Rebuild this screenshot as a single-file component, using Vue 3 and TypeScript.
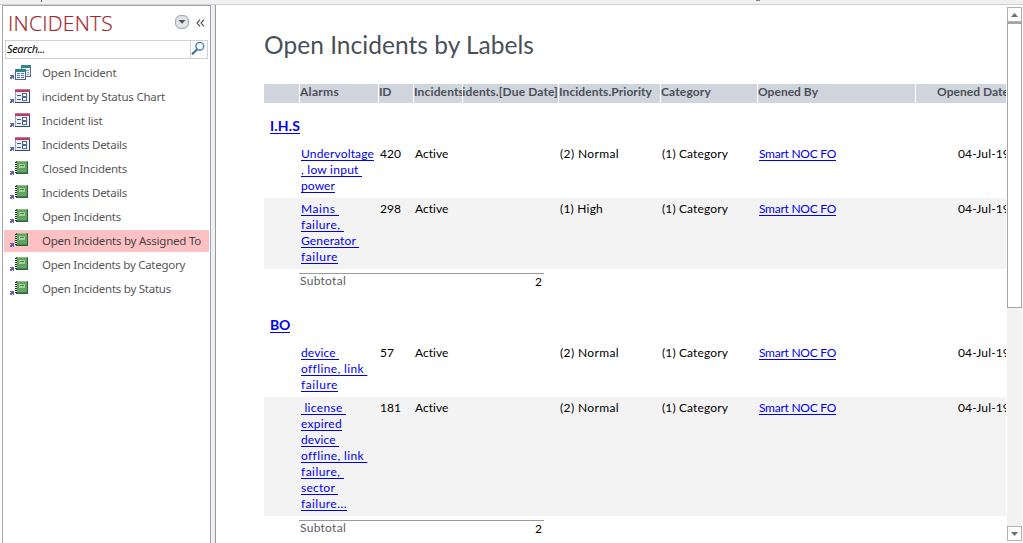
<script setup lang="ts">
import type { Directive } from 'vue'

type Fitted = [text: string, width: number]
interface NavItem { label: Fitted; icon: 'query' | 'form' | 'report'; selected?: boolean }
interface Incident { alarms: Fitted[]; id: Fitted; priority: Fitted }
interface Group { name: Fitted; rows: Incident[] }

/* Spreads the glyphs of a label evenly over its given width in pixels. */
const vFit: Directive<HTMLElement, number> = {
  mounted(el, { value }) {
    const natural = el.getBoundingClientRect().width
    const count = (el.textContent ?? '').length
    if (count) el.style.letterSpacing = `${(value - natural) / count}px`
  },
}

const nav: NavItem[] = [
  { label: ['Open Incident', 74.5], icon: 'query' },
  { label: ['incident by Status Chart', 123], icon: 'form' },
  { label: ['Incident list', 60.5], icon: 'form' },
  { label: ['Incidents Details', 85], icon: 'form' },
  { label: ['Closed Incidents', 85], icon: 'report' },
  { label: ['Incidents Details', 85], icon: 'report' },
  { label: ['Open Incidents', 79], icon: 'report' },
  { label: ['Open Incidents by Assigned To', 159], icon: 'report', selected: true },
  { label: ['Open Incidents by Category', 143], icon: 'report' },
  { label: ['Open Incidents by Status', 129], icon: 'report' },
]

const columns: { label: Fitted; align?: string }[] = [
  { label: ['', 0] },
  { label: ['Alarms', 39] },
  { label: ['ID', 12] },
  { label: ['Incidents', 50] },
  { label: ['Incidents.[Due Date]', 112], align: 'end' },
  { label: ['Incidents.Priority', 93] },
  { label: ['Category', 50] },
  { label: ['Opened By', 60] },
  { label: ['Opened Date', 72], align: 'date' },
]

const groups: Group[] = [
  {
    name: ['I.H.S', 30],
    rows: [
      { alarms: [['Undervoltage', 73], [', low input ', 61], ['power', 34]], id: ['420', 21], priority: ['(2) Normal', 59] },
      { alarms: [['Mains ', 38], ['failure, ', 43], ['Generator ', 58], ['failure', 37]], id: ['298', 21], priority: ['(1) High', 43] },
    ],
  },
  {
    name: ['BO', 20],
    rows: [
      { alarms: [['device ', 38], ['offline, link ', 66], ['failure', 37]], id: ['57', 14], priority: ['(2) Normal', 59] },
      {
        alarms: [[' license ', 45], ['expired', 41], ['device ', 38], ['offline, link ', 66], ['failure, ', 43], ['sector ', 37], ['failure...', 46]],
        id: ['181', 21],
        priority: ['(2) Normal', 59],
      },
    ],
  },
]
</script>

<template>
  <div class="window">
    <div class="strip"><i class="tail tail-p"></i><i class="tail tail-g"></i></div>
    <div class="body">
      <aside class="nav">
        <header class="nav-head">
          <h1><span v-fit="105" class="fit">INCIDENTS</span></h1>
          <svg class="menu" width="14" height="14" viewBox="0 0 14 14">
            <rect x=".6" y=".6" width="12.8" height="12.8" rx="5" fill="#e2e4e7" stroke="#969aa2" />
            <path d="M3.5 5h7L7 8.8z" fill="#4b5063" />
          </svg>
          <svg class="collapse" width="9" height="8" viewBox="0 0 9 8">
            <path d="M4 .7 1 4l3 3.3M8 .7 5 4l3 3.3" fill="none" stroke="#4c4f60" stroke-width="1.15" />
          </svg>
        </header>
        <div class="search">
          <span class="query"><span v-fit="38" class="fit">Search...</span></span>
          <span class="go">
            <svg width="15" height="15" viewBox="0 0 15 15">
              <path d="m6.2 8.2-4.6 4.6" stroke="#3f6fa9" stroke-width="2.2" stroke-linecap="round" />
              <circle cx="8.8" cy="5.3" r="3.9" fill="#f4f9ff" stroke="#4a7fbd" stroke-width="1.4" />
            </svg>
          </span>
        </div>
        <ul class="items">
          <li v-for="(item, i) in nav" :key="i" :class="{ selected: item.selected }">
            <svg class="icon" width="23" height="18" viewBox="0 0 23 18" shape-rendering="crispEdges">
              <path d="M1 11h4v4H4v-1H3v1H1v-2h1v-1H1z" fill="#6464ae" />
              <g v-if="item.icon === 'query'">
                <path d="M12 1h10v11H12z" fill="#eef3fa" />
                <path d="M12 1h10v3H12z" fill="#35828a" />
                <path d="M12 4h1v8h-1zM21 4h1v9h-1zM12 12h10v1H12z" fill="#5a7097" />
                <path d="M17 6h3v1h-3zM18 8h2v1h-2zM18 10h2v1h-2z" fill="#87a0c0" />
                <path d="M6 5h11v11H6z" fill="#eef3fa" />
                <path d="M6 5h11v3H6z" fill="#35828a" />
                <path d="M6 8h1v8H6zM16 8h1v8h-1zM6 15h11v1H6z" fill="#4c638d" />
                <path d="M8 9h3v1H8zM12 9h3v1h-3zM8 11h3v1H8zM12 11h3v1h-3zM8 13h3v1H8zM12 13h3v1h-3z" fill="#527aa0" />
              </g>
              <g v-else-if="item.icon === 'form'">
                <path d="M6 1h15v14H6z" fill="#e9f0fa" />
                <path d="M6 1h15v3H6z" fill="#b13d63" />
                <path d="M6 1h15v1H6z" fill="#cb7892" />
                <path d="M6 4h1v11H6z" fill="#91a6c8" />
                <path d="M20 4h1v11h-1zM6 14h15v1H6z" fill="#33496f" />
                <path d="M8 7h4v1H8zM8 11h4v1H8z" fill="#45597e" />
                <path d="M13.5 5.5h4v3h-4zM13.5 9.5h4v3h-4z" fill="#fff" stroke="#50658c" />
              </g>
              <g v-else>
                <path d="M7 1h12v13H7z" fill="#438447" />
                <path d="M8 1h10v11H8z" fill="#63a361" />
                <path d="M8 1h10v1H8z" fill="#8abc82" />
                <path d="M7 13h12v1H7zM18 2h1v12h-1z" fill="#2d6232" />
                <path d="M10 4h6v4h-6z" fill="#a5cf99" />
                <path d="M11 5h4v1h-4z" fill="#4a8b4b" />
                <path d="M6 2h2v1H6zM6 4h2v1H6zM6 6h2v1H6zM6 8h2v1H6zM6 10h2v1H6zM6 12h2v1H6z" fill="#222f26" />
                <path d="M7 3h1v1H7zM7 5h1v1H7zM7 7h1v1H7zM7 9h1v1H7zM7 11h1v1H7z" fill="#c8dbc6" />
              </g>
            </svg>
            <span v-fit="item.label[1]" class="fit">{{ item.label[0] }}</span>
          </li>
        </ul>
      </aside>
      <div class="splitter"></div>
      <main class="report">
        <h2><span v-fit="270" class="fit">Open Incidents by Labels</span></h2>
        <div class="grid head">
          <div v-for="(col, i) in columns" :key="i" :class="['cell', col.align]">
            <span v-if="col.label[0]" v-fit="col.label[1]" class="fit">{{ col.label[0] }}</span>
          </div>
        </div>
        <section v-for="group in groups" :key="group.name[0]" class="group">
          <h3><a v-fit="group.name[1]" class="fit">{{ group.name[0] }}</a></h3>
          <div v-for="(row, i) in group.rows" :key="i" class="grid row">
            <div></div>
            <div class="alarms">
              <div v-for="(line, n) in row.alarms" :key="n" class="line"><a v-fit="line[1]" class="fit">{{ line[0] }}</a></div>
            </div>
            <div><span v-fit="row.id[1]" class="fit">{{ row.id[0] }}</span></div>
            <div><span v-fit="33.5" class="fit">Active</span></div>
            <div></div>
            <div><span v-fit="row.priority[1]" class="fit">{{ row.priority[0] }}</span></div>
            <div><span v-fit="66" class="fit">(1) Category</span></div>
            <div><a v-fit="77" class="fit">Smart NOC FO</a></div>
            <div class="opened"><span v-fit="52" class="fit">04-Jul-19</span></div>
          </div>
          <footer class="subtotal">
            <span v-fit="46" class="fit">Subtotal</span>
            <span class="count">{{ group.rows.length }}</span>
          </footer>
        </section>
      </main>
      <div class="scrollbar">
        <div class="arrow"><svg width="7" height="4" viewBox="0 0 7 4"><path d="M0 4 3.5 0 7 4z" fill="#6d6d6d" /></svg></div>
        <div class="thumb"></div>
        <div class="track"></div>
        <div class="arrow"><svg width="7" height="4" viewBox="0 0 7 4"><path d="M0 0h7L3.5 4z" fill="#6d6d6d" /></svg></div>
      </div>
    </div>
  </div>
</template>

<style>
body { margin: 0; overflow: hidden; background: #fff; }
</style>

<style scoped>
.window { width: 1023px; height: 543px; overflow: hidden; display: flex; flex-direction: column; background: #fff; font-family: "Lato", "Liberation Sans", sans-serif; font-size: 12px; color: #000; }
h1, h2, h3, ul { margin: 0; padding: 0; font-weight: 400; }
.fit { display: inline-block; white-space: pre; flex: none; }
.strip { position: relative; box-sizing: border-box; height: 5px; flex: none; background: #f0f0f0; border-bottom: 1px solid #cfcfcf; }
.tail { position: absolute; top: 0; }
.tail-p { left: 41px; width: 1px; height: 2px; background: #666; }
.tail-g { left: 756px; width: 4px; height: 1px; background: #888; }
.body { display: flex; flex: 1; min-height: 0; }

.nav { box-sizing: border-box; width: 209px; margin-left: 2px; flex: none; border: 1px solid #9fa5b5; border-bottom: 0; font-family: "Noto Sans", sans-serif; }
.nav-head { display: flex; align-items: center; height: 34px; padding-left: 5px; }
.nav-head h1 { width: 167px; line-height: 34px; font-family: "Open Sans", "Noto Sans", sans-serif; font-size: 21px; font-weight: 300; color: #a4262c; -webkit-text-stroke: 0.2px #a4262c; }
.menu { margin-top: -3px; }
.collapse { margin: -1px 0 0 7px; }
.search { box-sizing: border-box; display: flex; width: 203px; height: 19px; margin-left: 2px; border: 1px solid #cfd1d6; }
.query { flex: 1; padding-left: 1px; line-height: 16px; font-size: 11px; font-style: italic; }
.go { width: 16px; border-left: 1px solid #cfd1d6; line-height: 0; }
.items { display: flex; flex-direction: column; gap: 2px; margin: 3px 1px 0; list-style: none; }
.items li { display: flex; align-items: center; height: 22px; padding-left: 5px; font-size: 11.5px; line-height: 22px; color: #575757; }
.items li.selected { background: #fec1c3; color: #444; }
.icon { flex: none; margin-right: 10px; }
.splitter { box-sizing: border-box; width: 5px; flex: none; background: #f0f0f2; border-right: 1px solid #9b9b9f; }

.report { flex: none; box-sizing: border-box; width: 790px; padding-left: 48px; overflow: hidden; }
.report h2 { height: 79px; line-height: 79px; font-size: 24.5px; color: #494f59; }
.grid { display: grid; grid-template-columns: 35px 78px 34px 48px 95px 101px 96px 157px 91px; column-gap: 1px; }
.head { height: 19px; font-weight: 700; color: #4b4f57; line-height: 16px; }
.cell { background: #cfd4dd; overflow: hidden; display: flex; }
.cell.end { justify-content: flex-end; }
.cell.date { padding-left: 21px; }
.group h3 { height: 40px; padding-left: 6px; line-height: 46px; font-size: 14px; font-weight: 700; }
.group h3 .fit { line-height: 18px; }
a { color: #0000f5; text-decoration: underline; text-underline-offset: 2px; text-decoration-thickness: 1px; }
.row { padding: 3px 0 4px; line-height: 16px; }
.row > div { padding-left: 1px; overflow: hidden; }
.row .opened { padding-left: 42px; white-space: nowrap; }
.row:nth-of-type(even) { background: #f3f3f3; }
.line { height: 16px; }
.subtotal { box-sizing: border-box; display: flex; justify-content: space-between; width: 245px; height: 29px; margin: 4px 0 0 35px; padding: 0 2px 0 1px; border-top: 1px solid #9a9a9e; line-height: 13px; color: #5a5e66; }
.count { margin-top: 1px; color: #000; }

.scrollbar { display: flex; flex-direction: column; width: 15px; height: 534px; margin: 2px 0 0 1px; }
.arrow { box-sizing: border-box; display: flex; align-items: center; justify-content: center; height: 15px; flex: none; border: 1px solid #b0b0b0; }
.thumb { box-sizing: border-box; height: 286px; flex: none; border: 1px solid #a5a5a5; border-top-width: 2px; }
.track { flex: 1; background: #f2f2f2; }
</style>
